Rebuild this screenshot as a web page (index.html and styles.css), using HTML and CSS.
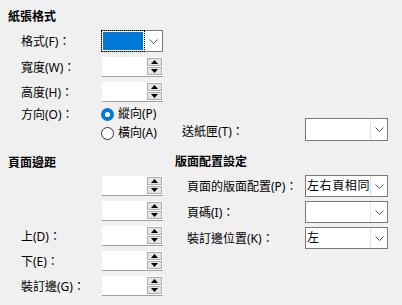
FILE: index.html
```html
<!DOCTYPE html>
<html lang="zh-Hant">
<head>
<meta charset="utf-8">
<link rel="stylesheet" href="styles.css">
</head>
<body>
<div class="page">
  <section class="sec1">
    <div class="heading">紙張格式</div>
    <div class="top">
      <div class="left">
        <div class="row r22">
          <span class="label">格式(F)：</span>
          <div class="combo focus">
            <div class="value"><div class="sel"></div></div>
            <div class="btn"><svg width="9" height="5" viewBox="0 0 9 5"><path d="M0.5 0.5 L4.5 4.5 L8.5 0.5" fill="none" stroke="#555" stroke-width="1"/></svg></div>
          </div>
        </div>
        <div class="row r20">
          <span class="label">寬度(W)：</span>
          <div class="spin"><div class="spinbtns"><div class="sb"><svg width="7" height="4" viewBox="0 0 7 4"><path d="M3.5 0 L7 4 L0 4 Z" fill="#000"/></svg></div><div class="sb"><svg width="7" height="4" viewBox="0 0 7 4"><path d="M0 0 L7 0 L3.5 4 Z" fill="#000"/></svg></div></div></div>
        </div>
        <div class="row r20">
          <span class="label">高度(H)：</span>
          <div class="spin"><div class="spinbtns"><div class="sb"><svg width="7" height="4" viewBox="0 0 7 4"><path d="M3.5 0 L7 4 L0 4 Z" fill="#000"/></svg></div><div class="sb"><svg width="7" height="4" viewBox="0 0 7 4"><path d="M0 0 L7 0 L3.5 4 Z" fill="#000"/></svg></div></div></div>
        </div>
        <div class="row r18 first-radio">
          <span class="label">方向(O)：</span>
          <span class="radio"><svg width="13" height="13" viewBox="0 0 13 13"><circle cx="6.5" cy="6.5" r="6.5" fill="#0078d7"/><circle cx="6.5" cy="6.5" r="2.6" fill="#fff"/></svg><span>縱向(P)</span></span>
        </div>
        <div class="row r18 second-radio">
          <span class="label"></span>
          <span class="radio"><svg width="13" height="13" viewBox="0 0 13 13"><circle cx="6.5" cy="6.5" r="6" fill="#fff" stroke="#333" stroke-width="1"/></svg><span>橫向(A)</span></span>
        </div>
      </div>
      <div class="tray">
        <span class="tlabel">送紙匣(T)：</span>
        <div class="combo wide h23">
          <div class="value"></div>
          <div class="btn sep"><svg width="9" height="5" viewBox="0 0 9 5"><path d="M0.5 0.5 L4.5 4.5 L8.5 0.5" fill="none" stroke="#555" stroke-width="1"/></svg></div>
        </div>
      </div>
    </div>
  </section>

  <section class="sec2">
    <div class="col margins">
      <div class="heading">頁面邊距</div>
      <div class="mrows">
        <div class="row r20"><span class="label"></span>
          <div class="spin"><div class="spinbtns"><div class="sb"><svg width="7" height="4" viewBox="0 0 7 4"><path d="M3.5 0 L7 4 L0 4 Z" fill="#000"/></svg></div><div class="sb"><svg width="7" height="4" viewBox="0 0 7 4"><path d="M0 0 L7 0 L3.5 4 Z" fill="#000"/></svg></div></div></div>
        </div>
        <div class="row r20"><span class="label"></span>
          <div class="spin"><div class="spinbtns"><div class="sb"><svg width="7" height="4" viewBox="0 0 7 4"><path d="M3.5 0 L7 4 L0 4 Z" fill="#000"/></svg></div><div class="sb"><svg width="7" height="4" viewBox="0 0 7 4"><path d="M0 0 L7 0 L3.5 4 Z" fill="#000"/></svg></div></div></div>
        </div>
        <div class="row r20"><span class="label">上(D)：</span>
          <div class="spin"><div class="spinbtns"><div class="sb"><svg width="7" height="4" viewBox="0 0 7 4"><path d="M3.5 0 L7 4 L0 4 Z" fill="#000"/></svg></div><div class="sb"><svg width="7" height="4" viewBox="0 0 7 4"><path d="M0 0 L7 0 L3.5 4 Z" fill="#000"/></svg></div></div></div>
        </div>
        <div class="row r20"><span class="label">下(E)：</span>
          <div class="spin"><div class="spinbtns"><div class="sb"><svg width="7" height="4" viewBox="0 0 7 4"><path d="M3.5 0 L7 4 L0 4 Z" fill="#000"/></svg></div><div class="sb"><svg width="7" height="4" viewBox="0 0 7 4"><path d="M0 0 L7 0 L3.5 4 Z" fill="#000"/></svg></div></div></div>
        </div>
        <div class="row r20"><span class="label">裝訂邊(G)：</span>
          <div class="spin"><div class="spinbtns"><div class="sb"><svg width="7" height="4" viewBox="0 0 7 4"><path d="M3.5 0 L7 4 L0 4 Z" fill="#000"/></svg></div><div class="sb"><svg width="7" height="4" viewBox="0 0 7 4"><path d="M0 0 L7 0 L3.5 4 Z" fill="#000"/></svg></div></div></div>
        </div>
      </div>
    </div>
    <div class="col layout">
      <div class="heading">版面配置設定</div>
      <div class="lrows">
        <div class="row r22"><span class="llabel">頁面的版面配置(P)：</span>
          <div class="combo wide">
            <div class="value text">左右頁相同</div>
            <div class="btn sep"><svg width="9" height="5" viewBox="0 0 9 5"><path d="M0.5 0.5 L4.5 4.5 L8.5 0.5" fill="none" stroke="#555" stroke-width="1"/></svg></div>
          </div>
        </div>
        <div class="row r22"><span class="llabel">頁碼(I)：</span>
          <div class="combo wide">
            <div class="value text"></div>
            <div class="btn sep"><svg width="9" height="5" viewBox="0 0 9 5"><path d="M0.5 0.5 L4.5 4.5 L8.5 0.5" fill="none" stroke="#555" stroke-width="1"/></svg></div>
          </div>
        </div>
        <div class="row r22"><span class="llabel">裝訂邊位置(K)：</span>
          <div class="combo wide">
            <div class="value text">左</div>
            <div class="btn sep"><svg width="9" height="5" viewBox="0 0 9 5"><path d="M0.5 0.5 L4.5 4.5 L8.5 0.5" fill="none" stroke="#555" stroke-width="1"/></svg></div>
          </div>
        </div>
      </div>
    </div>
  </section>
</div>
</body>
</html>
```

FILE: styles.css
```css
* { box-sizing: border-box; }
html, body {
  margin: 0;
  padding: 0;
  background: #f0f0f0;
  width: 402px;
  height: 305px;
  overflow: hidden;
}
.page {
  font-family: "Noto Sans", "Noto Sans CJK TC", sans-serif;
  font-size: 12px;
  line-height: 14px;
  color: #000;
  padding: 10px 0 0 8px;
}
.heading {
  font-weight: 700;
  height: 14px;
  white-space: nowrap;
}
.top {
  display: flex;
  margin-top: 6px;
}
.left {
  display: flex;
  flex-direction: column;
  gap: 5px;
  padding-left: 13px;
  width: 155px;
}
.row {
  display: flex;
  align-items: center;
  white-space: nowrap;
}
.r22 { height: 22px; }
.r20 { height: 20px; }
.r18 { height: 18px; }
.first-radio { margin-top: -2px; }
.second-radio { margin-top: -4px; }
.label {
  width: 80px;
  flex: none;
  padding-top: 2px;
}
.combo {
  display: flex;
  width: 62px;
  height: 22px;
  border: 1px solid #7a7a7a;
  background: #fff;
}
.combo.wide { width: 83px; }
.combo.h23 { height: 23px; }
.value {
  flex: 1;
  min-width: 0;
}
.combo.focus .value {
  margin: -1px 0 -1px -1px;
  border: 1px dotted #000;
  padding: 1px;
}
.sel {
  width: 100%;
  height: 100%;
  background: #0078d7;
}
.value.text {
  padding-left: 1px;
  line-height: 20px;
  font-size: 12px;
  overflow: hidden;
  letter-spacing: 0.6px;
}
.btn {
  width: 17px;
  flex: none;
  display: flex;
  align-items: center;
  justify-content: center;
}
.btn.sep {
  border-left: 1px solid #e3e3e3;
}
.spin {
  width: 61px;
  height: 20px;
  background: #fff;
  border-bottom: 1px solid #a0a0a0;
  display: flex;
  justify-content: flex-end;
  padding: 1px 1px 1px 0;
  margin-left: 1px;
}
.spinbtns {
  width: 15px;
  display: flex;
  flex-direction: column;
  gap: 1px;
}
.sb {
  height: 8px;
  border: 1px solid #adadad;
  background: #e5e5e5;
  display: flex;
  align-items: center;
  justify-content: center;
}
.radio {
  display: flex;
  align-items: center;
  gap: 4px;
}
.radio svg { display: block; }
.tray {
  align-self: flex-end;
  display: flex;
  align-items: center;
  margin-left: 19px;
  margin-bottom: 1px;
}
.tlabel {
  width: 123px;
  padding-top: 4px;
}
.sec2 {
  display: flex;
  margin-top: 14px;
}
.margins { width: 167px; }
.mrows {
  display: flex;
  flex-direction: column;
  gap: 5px;
  margin-top: 6px;
  padding-left: 13px;
}
.layout .heading { margin-top: -1px; }
.lrows {
  display: flex;
  flex-direction: column;
  gap: 4px;
  margin-top: 6px;
  padding-left: 12px;
}
.llabel {
  width: 118px;
  flex: none;
  padding-top: 1px;
}
```
